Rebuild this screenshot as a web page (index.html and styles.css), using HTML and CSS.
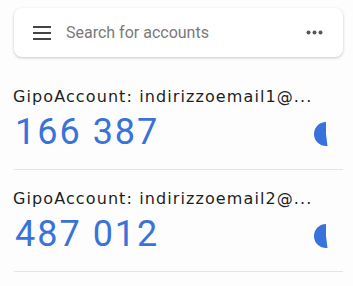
FILE: index.html
```html
<!DOCTYPE html>
<html>
<head>
<meta charset="utf-8">
<link rel="stylesheet" href="styles.css">
</head>
<body>
<div class="search">
  <svg class="menu" width="18" height="14" viewBox="0 0 18 14"><rect x="0" y="0" width="18" height="2" fill="#444"/><rect x="0" y="6" width="18" height="2" fill="#444"/><rect x="0" y="12" width="18" height="2" fill="#444"/></svg>
  <span class="placeholder">Search for accounts</span>
  <svg class="more" width="17" height="5" viewBox="0 0 17 5"><circle cx="2.5" cy="2.5" r="2" fill="#555"/><circle cx="8.5" cy="2.5" r="2" fill="#555"/><circle cx="14.5" cy="2.5" r="2" fill="#555"/></svg>
</div>
<div class="list">
  <div class="item">
    <div class="name">GipoAccount: indirizzoemail1@...</div>
    <div class="row">
      <span class="code">166 387</span>
      <svg class="pie" width="24" height="24" viewBox="0 0 24 24"><path d="M12 12 L12 0 A12 12 0 1 0 13.5 23.9 Z" fill="#3a72dc"/></svg>
    </div>
    <div class="divider"></div>
  </div>
  <div class="item">
    <div class="name">GipoAccount: indirizzoemail2@...</div>
    <div class="row">
      <span class="code">487 012</span>
      <svg class="pie" width="24" height="24" viewBox="0 0 24 24"><path d="M12 12 L12 0 A12 12 0 1 0 13.5 23.9 Z" fill="#3a72dc"/></svg>
    </div>
    <div class="divider"></div>
  </div>
</div>
</body>
</html>
```
FILE: styles.css
```css
html, body {
  margin: 0;
  padding: 0;
  background: #fdfdfd;
}
body {
  width: 353px;
  height: 286px;
  overflow: hidden;
  font-family: Roboto, "Liberation Sans", sans-serif;
}
.search {
  margin: 8px 10px 0 14px;
  height: 49px;
  background: #fff;
  border-radius: 8px;
  box-shadow: 0 1px 3px rgba(0,0,0,0.22);
  display: flex;
  align-items: center;
  padding: 0 20px 0 19px;
  box-sizing: border-box;
}
.menu {
  flex: none;
}
.placeholder {
  margin-left: 15px;
  font-size: 16px;
  color: #7a7a7a;
  flex: 1;
}
.more {
  flex: none;
}
.list {
  margin-top: 30px;
}
.item {
  padding: 0 10px 0 13px;
}
.name {
  font-family: "DejaVu Sans", sans-serif;
  font-size: 16px;
  letter-spacing: 1.1px;
  line-height: 20px;
  color: #1e1e1e;
  white-space: nowrap;
}
.row {
  display: flex;
  align-items: center;
  justify-content: space-between;
  padding-right: 5px;
  margin-top: 4px;
}
.code {
  font-size: 36px;
  line-height: 42px;
  letter-spacing: 2px;
  color: #3a72dc;
  margin-left: 2px;
}
.pie {
  flex: none;
  margin-top: 4px;
}
.divider {
  margin: 16px 0 0 1px;
  height: 1px;
  background: #e4e4e4;
}
.item + .item {
  margin-top: 19px;
}
```
